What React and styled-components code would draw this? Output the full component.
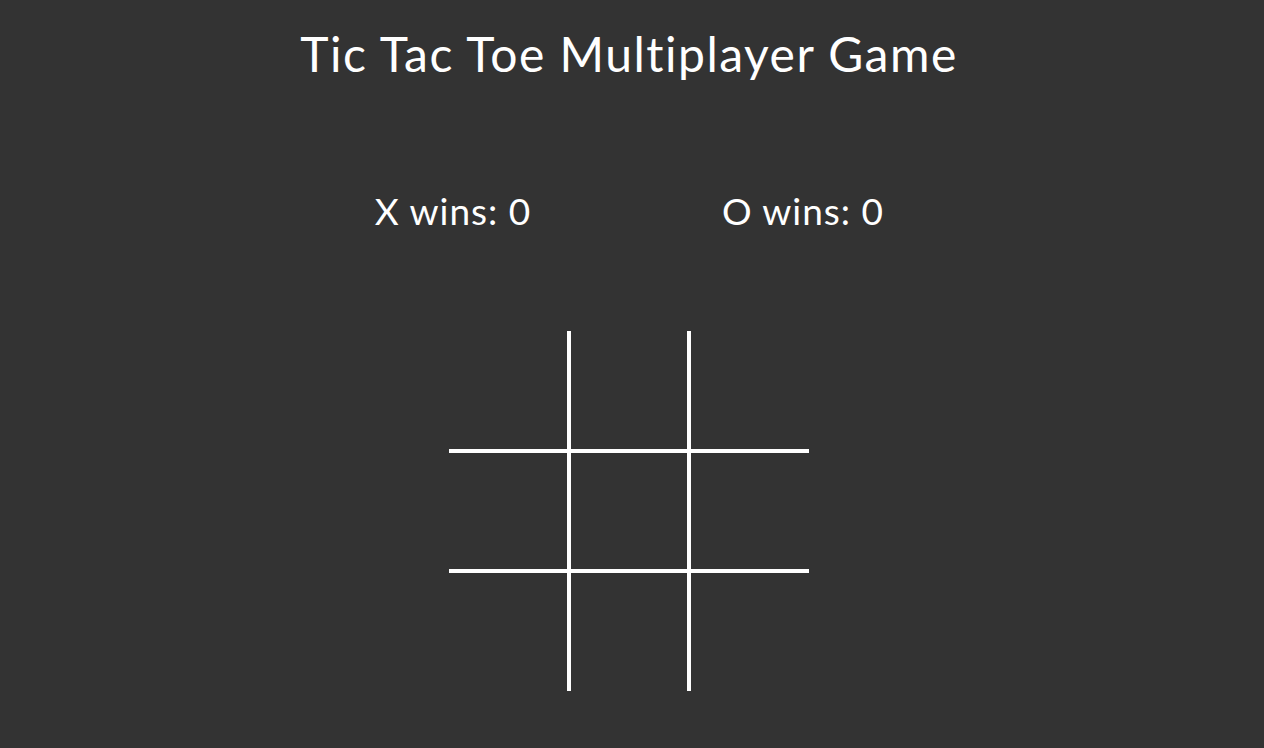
import styled, { createGlobalStyle } from "styled-components"

const Global=createGlobalStyle`
html,body{
  margin: 0;
  padding: 0;
  background-color: #333333;
}
body{
  font-family: "Lato", "Open Sans", sans-serif;
  color: #ffffff;
}
`
const Page=styled.div`
width: 1258px;
display: flex;
flex-direction: column;
align-items: center;
`
const Title=styled.h1`
margin: 24px 0 0;
font-size: 48px;
font-weight: 400;
letter-spacing: 1.5px;
line-height: 60px;
`
const Scores=styled.div`
display: flex;
width: 700px;
margin-top: 105px;
margin-left: -2px;
`
const Score=styled.div`
flex: 1;
text-align: center;
font-size: 37px;
letter-spacing: 1px;
line-height: 44px;
`
const Board=styled.div`
display: grid;
grid-template-columns: repeat(3, 120px);
grid-template-rows: repeat(3, 120px);
margin-top: 98px;
`
const Cell=styled.div`
box-sizing: border-box;
border-right: ${p=>p.$right?"4px solid #ffffff":"none"};
border-bottom: ${p=>p.$bottom?"4px solid #ffffff":"none"};
margin-right: ${p=>p.$right?"-2px":"0"};
margin-bottom: ${p=>p.$bottom?"-2px":"0"};
`

export default function App(){
  const cells=[0,1,2,3,4,5,6,7,8];
  return<>
    <Global />
    <Page>
      <Title>Tic Tac Toe Multiplayer Game</Title>
      <Scores>
        <Score>X wins: 0</Score>
        <Score>O wins: 0</Score>
      </Scores>
      <Board>
        {cells.map(i=>(
          <Cell key={i} $right={i%3!==2} $bottom={i<6} />
        ))}
      </Board>
    </Page>
  </>
}
